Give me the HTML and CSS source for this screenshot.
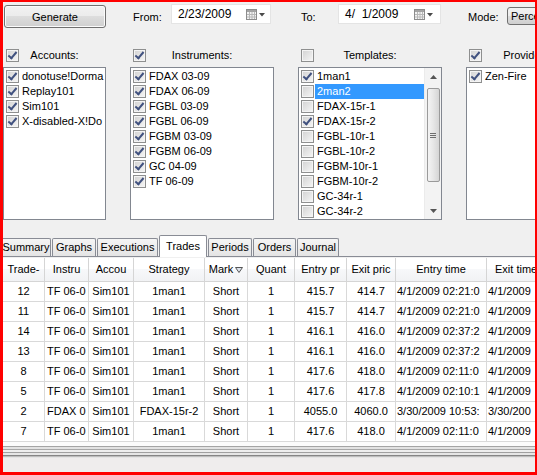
FILE: index.html
```html
<!DOCTYPE html>
<html lang="en">
<head>
    <meta charset="UTF-8">
    <title>Performance</title>
    <link rel="stylesheet" href="styles.css">
</head>
<body>
<div class="window">
    <!-- top toolbar -->
    <div class="toolbar">
        <button class="btn-generate">Generate</button>
        <span class="lbl lbl-from">From:</span>
        <div class="datebox date-from">
            <span>2/23/2009</span>
            <svg class="cal" width="20" height="11" viewBox="0 0 20 11"><rect x="0.5" y="0.5" width="10" height="10" fill="#f2f2f2" stroke="#8c8c8c"/><rect x="1" y="1" width="9" height="2" fill="#a3a3a3"/><path d="M1 5.5h9M1 8h9M3.5 3v7M6 3v7M8.5 3v7" stroke="#b8b8b8"/><path d="M13 4h6l-3 3.5z" fill="#4a4a4a"/></svg>
        </div>
        <span class="lbl lbl-to">To:</span>
        <div class="datebox date-to">
            <span>4/  1/2009</span>
            <svg class="cal" width="20" height="11" viewBox="0 0 20 11"><rect x="0.5" y="0.5" width="10" height="10" fill="#f2f2f2" stroke="#8c8c8c"/><rect x="1" y="1" width="9" height="2" fill="#a3a3a3"/><path d="M1 5.5h9M1 8h9M3.5 3v7M6 3v7M8.5 3v7" stroke="#b8b8b8"/><path d="M13 4h6l-3 3.5z" fill="#4a4a4a"/></svg>
        </div>
        <span class="lbl lbl-mode">Mode:</span>
        <div class="combo">Percent</div>
    </div>

    <!-- filter lists -->
    <div class="panels">
        <div class="panel panel-accounts">
            <div class="panel-head"><span class="cb on"></span><span class="panel-title">Accounts:</span></div>
            <div class="listbox">
                <div class="items">
                    <div class="item"><span class="cb on"></span><span class="item-text">donotuse!Dorma</span></div>
                    <div class="item"><span class="cb on"></span><span class="item-text">Replay101</span></div>
                    <div class="item"><span class="cb on"></span><span class="item-text">Sim101</span></div>
                    <div class="item"><span class="cb on"></span><span class="item-text">X-disabled-X!Do</span></div>
                </div>
            </div>
        </div>

        <div class="panel panel-instruments">
            <div class="panel-head"><span class="cb on"></span><span class="panel-title">Instruments:</span></div>
            <div class="listbox">
                <div class="items">
                    <div class="item"><span class="cb on"></span><span class="item-text">FDAX 03-09</span></div>
                    <div class="item"><span class="cb on"></span><span class="item-text">FDAX 06-09</span></div>
                    <div class="item"><span class="cb on"></span><span class="item-text">FGBL 03-09</span></div>
                    <div class="item"><span class="cb on"></span><span class="item-text">FGBL 06-09</span></div>
                    <div class="item"><span class="cb on"></span><span class="item-text">FGBM 03-09</span></div>
                    <div class="item"><span class="cb on"></span><span class="item-text">FGBM 06-09</span></div>
                    <div class="item"><span class="cb on"></span><span class="item-text">GC 04-09</span></div>
                    <div class="item"><span class="cb on"></span><span class="item-text">TF 06-09</span></div>
                </div>
            </div>
        </div>

        <div class="panel panel-templates">
            <div class="panel-head"><span class="cb"></span><span class="panel-title">Templates:</span></div>
            <div class="listbox listbox-scroll">
                <div class="items">
                    <div class="item"><span class="cb on"></span><span class="item-text">1man1</span></div>
                    <div class="item"><span class="cb"></span><span class="item-text selected">2man2</span></div>
                    <div class="item"><span class="cb"></span><span class="item-text">FDAX-15r-1</span></div>
                    <div class="item"><span class="cb on"></span><span class="item-text">FDAX-15r-2</span></div>
                    <div class="item"><span class="cb"></span><span class="item-text">FGBL-10r-1</span></div>
                    <div class="item"><span class="cb"></span><span class="item-text">FGBL-10r-2</span></div>
                    <div class="item"><span class="cb"></span><span class="item-text">FGBM-10r-1</span></div>
                    <div class="item"><span class="cb"></span><span class="item-text">FGBM-10r-2</span></div>
                    <div class="item"><span class="cb"></span><span class="item-text">GC-34r-1</span></div>
                    <div class="item"><span class="cb"></span><span class="item-text">GC-34r-2</span></div>
                </div>
                <div class="scrollbar">
                    <div class="sb-arrow"><svg width="7" height="4" viewBox="0 0 7 4"><path d="M0 4L3.5 0L7 4z" fill="#555"/></svg></div>
                    <div class="sb-thumb"><svg width="6" height="5" viewBox="0 0 6 5"><path d="M0 0.5h6M0 2.5h6M0 4.5h6" stroke="#6e6e6e"/></svg></div>
                    <div class="sb-fill"></div>
                    <div class="sb-arrow"><svg width="7" height="4" viewBox="0 0 7 4"><path d="M0 0L3.5 4L7 0z" fill="#555"/></svg></div>
                </div>
            </div>
        </div>

        <div class="panel panel-providers">
            <div class="panel-head"><span class="cb on"></span><span class="panel-title">Providers:</span></div>
            <div class="listbox">
                <div class="items">
                    <div class="item"><span class="cb on"></span><span class="item-text">Zen-Fire</span></div>
                </div>
            </div>
        </div>
    </div>

    <!-- result tabs -->
    <div class="tabs">
        <div class="tab tab-summary">Summary</div>
        <div class="tab tab-graphs">Graphs</div>
        <div class="tab tab-executions">Executions</div>
        <div class="tab tab-trades active">Trades</div>
        <div class="tab tab-periods">Periods</div>
        <div class="tab tab-orders">Orders</div>
        <div class="tab tab-journal">Journal</div>
    </div>

    <!-- trades grid -->
    <div class="grid">
        <div class="grid-row grid-head">
            <div>Trade-</div>
            <div>Instru</div>
            <div>Accou</div>
            <div>Strategy</div>
            <div>Mark<svg class="sort" width="8" height="6" viewBox="0 0 8 6"><path d="M0.5 0.5h7L4 5.5z" fill="#dde4ee" stroke="#555"/></svg></div>
            <div>Quant</div>
            <div>Entry pr</div>
            <div>Exit pric</div>
            <div>Entry time</div>
            <div class="left">Exit time</div>
        </div>
        <div class="grid-row">
            <div>12</div><div class="left">TF 06-0</div><div>Sim101</div><div>1man1</div><div>Short</div><div>1</div><div>415.7</div><div>414.7</div><div class="left">4/1/2009 02:21:0</div><div class="left">4/1/2009</div>
        </div>
        <div class="grid-row">
            <div>11</div><div class="left">TF 06-0</div><div>Sim101</div><div>1man1</div><div>Short</div><div>1</div><div>415.7</div><div>414.7</div><div class="left">4/1/2009 02:21:0</div><div class="left">4/1/2009</div>
        </div>
        <div class="grid-row">
            <div>14</div><div class="left">TF 06-0</div><div>Sim101</div><div>1man1</div><div>Short</div><div>1</div><div>416.1</div><div>416.0</div><div class="left">4/1/2009 02:37:2</div><div class="left">4/1/2009</div>
        </div>
        <div class="grid-row">
            <div>13</div><div class="left">TF 06-0</div><div>Sim101</div><div>1man1</div><div>Short</div><div>1</div><div>416.1</div><div>416.0</div><div class="left">4/1/2009 02:37:2</div><div class="left">4/1/2009</div>
        </div>
        <div class="grid-row">
            <div>8</div><div class="left">TF 06-0</div><div>Sim101</div><div>1man1</div><div>Short</div><div>1</div><div>417.6</div><div>418.0</div><div class="left">4/1/2009 02:11:0</div><div class="left">4/1/2009</div>
        </div>
        <div class="grid-row">
            <div>5</div><div class="left">TF 06-0</div><div>Sim101</div><div>1man1</div><div>Short</div><div>1</div><div>417.6</div><div>417.8</div><div class="left">4/1/2009 02:10:1</div><div class="left">4/1/2009</div>
        </div>
        <div class="grid-row">
            <div>2</div><div class="left">FDAX 0</div><div>Sim101</div><div>FDAX-15r-2</div><div>Short</div><div>1</div><div>4055.0</div><div>4060.0</div><div class="left">3/30/2009 10:53:</div><div class="left">3/30/200</div>
        </div>
        <div class="grid-row">
            <div>7</div><div class="left">TF 06-0</div><div>Sim101</div><div>1man1</div><div>Short</div><div>1</div><div>417.6</div><div>418.0</div><div class="left">4/1/2009 02:11:0</div><div class="left">4/1/2009</div>
        </div>
    </div>

    <div class="grid-foot"></div>
    <div class="status"></div>
</div>
</body>
</html>
```

FILE: styles.css
```css
body {
    margin: 0;
    font-family: "Liberation Sans", Arial, sans-serif;
    font-size: 11px;
    color: #000;
    background: #f0f0f0;
}

.window {
    width: 537px;
    height: 475px;
    box-sizing: border-box;
    border: solid #f00;
    border-width: 2px 2px 3px 3px;
    background: #f0f0f0;
    overflow: hidden;
}

/* toolbar */
.toolbar {
    display: flex;
    align-items: center;
    height: 25px;
    margin-top: 2px;
    white-space: nowrap;
}

.btn-generate {
    flex: none;
    align-self: flex-start;
    margin: 1px 0 0 1px;
    width: 102px;
    height: 23px;
    padding: 0;
    border: 1px solid #707070;
    border-radius: 3px;
    background: linear-gradient(#f2f2f2 0%, #ebebeb 50%, #dddddd 50%, #cfcfcf 100%);
    box-shadow: inset 0 0 0 1px #fbfbfb;
    font-family: inherit;
    font-size: 11px;
    color: #000;
}

.lbl {
    flex: none;
}

.lbl-from {
    margin-left: 27px;
    width: 38px;
}

.lbl-to {
    margin-left: 30px;
    width: 37px;
}

.lbl-mode {
    margin-left: 27px;
    width: 39px;
}

.datebox {
    flex: none;
    align-self: flex-start;
    display: flex;
    align-items: center;
    justify-content: space-between;
    box-sizing: border-box;
    height: 20px;
    padding: 0 4px 0 6px;
    background: #fff;
    border: 1px solid #e4e4e4;
    font-size: 12px;
    white-space: pre;
}

.date-from {
    width: 100px;
}

.date-to {
    width: 103px;
    padding-right: 6px;
}

.combo {
    flex: none;
    align-self: flex-start;
    margin-top: 3px;
    width: 80px;
    height: 18px;
    box-sizing: border-box;
    padding-left: 3px;
    line-height: 16px;
    border: 1px solid #707070;
    border-radius: 3px;
    background: linear-gradient(#f2f2f2 0%, #ebebeb 50%, #dddddd 50%, #cfcfcf 100%);
}

/* checkboxes */
.cb {
    flex: none;
    position: relative;
    display: inline-block;
    width: 13px;
    height: 13px;
    box-sizing: border-box;
    border: 1px solid #8e8f8f;
    background: linear-gradient(135deg, #d2d2d2, #f6f6f6);
    box-shadow: inset 0 0 0 1px #f4f4f4;
}

.cb.on::after {
    content: "";
    position: absolute;
    left: 3px;
    top: 0;
    width: 3px;
    height: 7px;
    border: solid #40517f;
    border-width: 0 2px 2px 0;
    transform: rotate(40deg);
}

/* filter panels */
.panels {
    display: flex;
    gap: 24px;
    margin-top: 20px;
}

.panel {
    flex: none;
}

.panel-accounts { width: 103px; }
.panel-instruments { width: 144px; }
.panel-templates { width: 144px; }
.panel-providers { width: 124px; }

.panel-head {
    display: grid;
    grid-template-columns: 1fr auto 1fr;
    align-items: center;
    height: 13px;
    margin-bottom: 5px;
}

.panel-head .cb {
    margin-left: 3px;
}

.panel-title {
    line-height: 13px;
    white-space: nowrap;
}

.listbox {
    height: 153px;
    box-sizing: border-box;
    border: 1px solid #828790;
    background: #fff;
    overflow: hidden;
}

.listbox-scroll {
    display: flex;
}

.items {
    flex: 1;
    padding-top: 1px;
    min-width: 0;
}

.item {
    display: flex;
    align-items: center;
    height: 15px;
    white-space: nowrap;
}

.item .cb {
    margin-left: 2px;
}

.item-text {
    flex: 1;
    margin-left: 1px;
    padding: 0 2px;
    line-height: 15px;
    overflow: hidden;
}

.item-text.selected {
    background: #3399ff;
    color: #fff;
}

.scrollbar {
    flex: none;
    width: 17px;
    display: flex;
    flex-direction: column;
    align-items: center;
    background: #f3f3f3;
    border-left: 1px solid #ebebeb;
    box-sizing: border-box;
}

.sb-arrow {
    height: 17px;
    width: 100%;
    display: flex;
    align-items: center;
    justify-content: center;
}

.sb-thumb {
    width: 13px;
    height: 94px;
    margin-top: 3px;
    box-sizing: border-box;
    border: 1px solid #9a9a9a;
    border-radius: 2px;
    background: linear-gradient(to right, #f4f4f4, #e6e6e6 50%, #d5d5d5);
    display: flex;
    align-items: center;
    justify-content: center;
}

.sb-fill {
    flex: 1;
}

/* tabs */
.tabs {
    display: flex;
    align-items: flex-end;
    height: 22px;
    margin-top: 15px;
    margin-left: -2px;
    box-sizing: border-box;
    border-bottom: 1px solid #898c95;
}

.tab {
    flex: none;
    box-sizing: border-box;
    height: 18px;
    margin-right: 1px;
    border: 1px solid #898c95;
    border-bottom: none;
    border-radius: 2px 2px 0 0;
    background: linear-gradient(#f5f5f5, #e4e4e4);
    text-align: center;
    line-height: 17px;
    white-space: nowrap;
}

.tab.active {
    height: 22px;
    margin-bottom: -1px;
    background: #fff;
    line-height: 20px;
}

.tab-summary { width: 50px; }
.tab-graphs { width: 44px; }
.tab-executions { width: 61px; }
.tab-trades { width: 48px; }
.tab-periods { width: 44px; }
.tab-orders { width: 43px; }
.tab-journal { width: 42px; }

/* grid */
.grid {
    width: 574px;
    margin-top: 1px;
    background: #fff;
}

.grid-row {
    display: grid;
    grid-template-columns: 42px 44px 45px 71px 43px 47px 52px 49px 91px 90px;
    height: 20px;
    box-sizing: border-box;
    border-bottom: 1px solid #d9d9d9;
}

.grid-row > div {
    border-right: 1px solid #d9d9d9;
    text-align: center;
    line-height: 19px;
    overflow: hidden;
    white-space: nowrap;
}

.grid-row > .left {
    text-align: left;
    padding-left: 1px;
}

.grid-row > div:nth-child(2).left {
    padding-left: 2px;
}

.grid-head {
    height: 24px;
    border-bottom-color: #d5d5d5;
    background: linear-gradient(#ffffff 0%, #ffffff 50%, #f7f8fa 50%, #f1f2f4 100%);
}

.grid-head > div {
    line-height: 23px;
    border-right-color: #d5d5d5;
}

.grid-head > .left {
    padding-left: 8px;
}

.sort {
    margin-left: 2px;
    vertical-align: 0;
}

.grid-foot {
    height: 16px;
    background: linear-gradient(#fbfbfb 0 4px, #a4a4a4 4px 5px, #e2e2e2 5px 7px, #a8a8a8 7px 8px,
        #eeeeee 8px 10px, #a0a0a0 10px 11px, #e6e6e6 11px 13px, #858585 13px 14px, #bdbdbd 14px 15px, #e4e4e4 15px 16px);
}

.status {
    height: 14px;
    background: #efeded;
}
```
